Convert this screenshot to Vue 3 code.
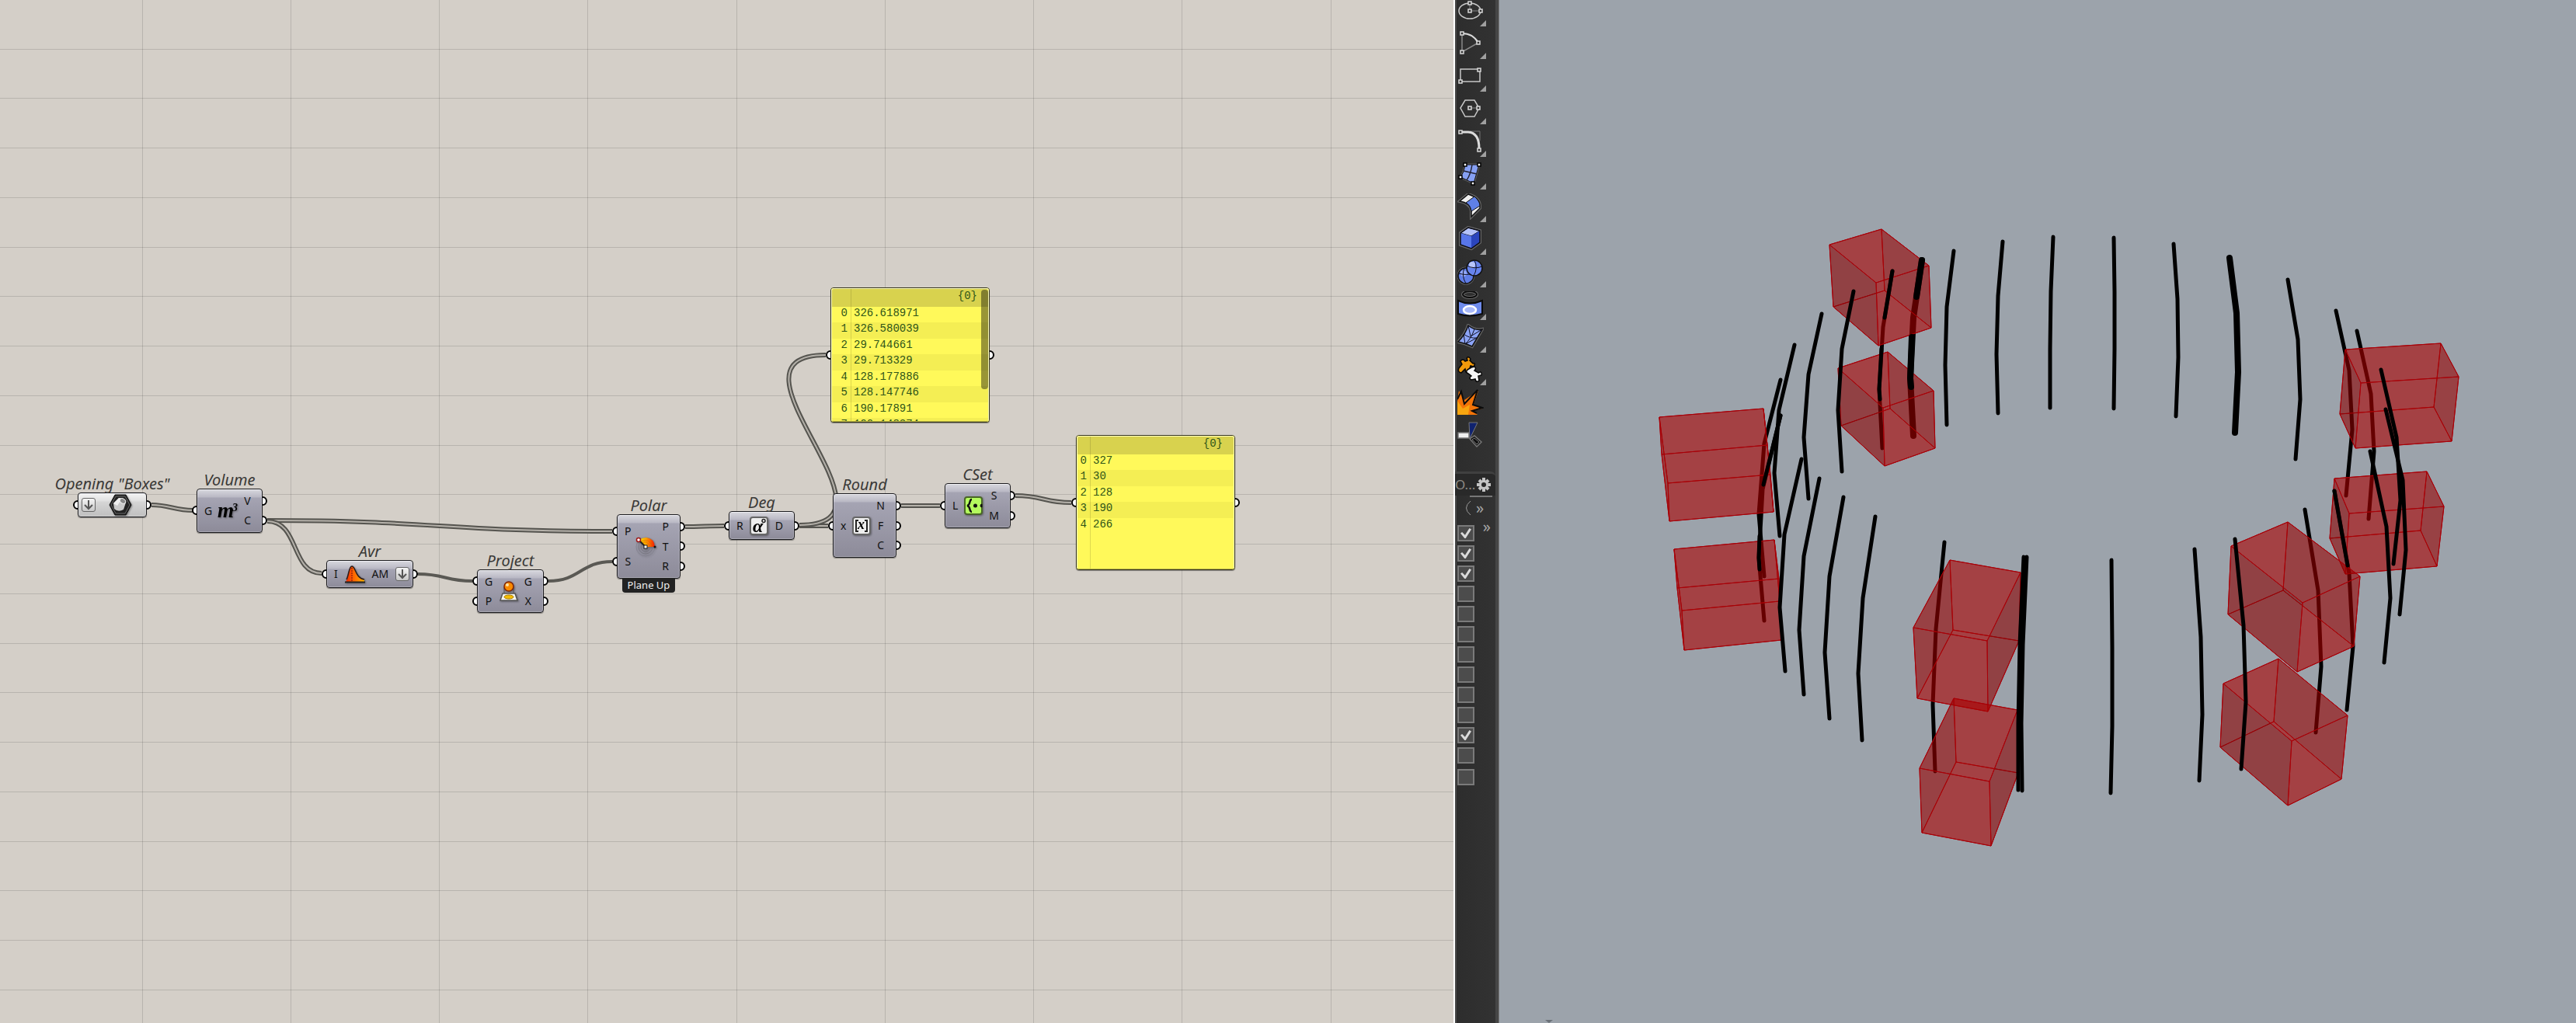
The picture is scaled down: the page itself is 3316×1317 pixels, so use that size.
<script setup>
import { ref } from 'vue'

// Canvas grid
const columns = Array.from({ length: 20 }, (_, i) => Math.floor(183 + 191.25 * i))
const rows = Array.from({ length: 32 }, (_, i) => Math.floor(63 + 63.75 * i))

// Component nodes on the canvas
const nodes = [
  { id: 'boxes', title: 'Opening "Boxes"', x: 100, y: 634, w: 89, h: 32, ins: [], outs: [], icon: 'geometry', light: true, flattenIn: true },
  { id: 'volume', title: 'Volume', x: 253, y: 629, w: 85, h: 57, ins: ['G'], outs: ['V', 'C'], icon: 'volume' },
  { id: 'avr', title: 'Avr', x: 420, y: 721, w: 112, h: 36, ins: ['I'], outs: ['AM'], icon: 'average', flattenOut: true },
  { id: 'project', title: 'Project', x: 614, y: 733, w: 86, h: 56, ins: ['G', 'P'], outs: ['G', 'X'], icon: 'project' },
  { id: 'polar', title: 'Polar', x: 794, y: 662, w: 82, h: 83, ins: ['P', 'S'], outs: ['P', 'T', 'R'], icon: 'polar', tag: 'Plane Up' },
  { id: 'deg', title: 'Deg', x: 938, y: 658, w: 85, h: 37, ins: ['R'], outs: ['D'], icon: 'degrees' },
  { id: 'round', title: 'Round', x: 1072, y: 635, w: 82, h: 83, ins: ['x'], outs: ['N', 'F', 'C'], icon: 'round' },
  { id: 'cset', title: 'CSet', x: 1216, y: 622, w: 85, h: 58, ins: ['L'], outs: ['S', 'M'], icon: 'set' }
]

const panels = [
  { id: 'angles', x: 1069, y: 370, indexWidth: 21, scroll: true, values: ['326.618971', '326.580039', '29.744661', '29.713329', '128.177886', '128.147746', '190.17891', '190.148374'] },
  { id: 'rounded', x: 1385, y: 560, indexWidth: 13, scroll: false, values: ['327', '30', '128', '190', '266'] }
]

const ports = [
  [100, 650], [189, 650], [253, 657], [338, 645], [338, 670], [420, 739], [532, 739],
  [614, 748], [614, 774], [700, 748], [700, 774], [794, 684], [794, 723],
  [876, 678], [876, 703], [876, 729], [938, 677], [1023, 677], [1072, 677],
  [1154, 651], [1154, 677], [1154, 702], [1216, 651], [1301, 638], [1301, 664],
  [1069, 457], [1274, 457], [1385, 647], [1590, 647]
]

const listWires = [
  'M195 650C218 650 225 657 248 657',
  'M344 670C566 670 566 684 788 684',
  'M344 671C386 671 374 738 414 738',
  'M882 678C900 678 914 677 932 677',
  'M1029 677H1066',
  'M1029 676C1179 676 913 457 1063 457',
  'M1160 651H1210',
  'M1307 638C1343 638 1343 647 1379 647'
]
const itemWires = [
  'M538 739C573 739 573 748 608 748',
  'M706 748C747 748 747 723 788 723'
]

// Toolbar
const tools = ['ellipse', 'arc', 'rectangle', 'polygon', 'fillet', 'surface', 'bend', 'box', 'spheres', 'projectCurve', 'mesh', 'puzzle', 'explode', 'split']
const snaps = ref([
  { name: 'End', on: true }, { name: 'Near', on: true }, { name: 'Point', on: true },
  { name: 'Mid', on: false }, { name: 'Cen', on: false }, { name: 'Int', on: false },
  { name: 'Perp', on: false }, { name: 'Tan', on: false }, { name: 'Quad', on: false },
  { name: 'Knot', on: false }, { name: 'Vertex', on: true }, { name: 'Project', on: false },
  { name: 'Disable', on: false }
])

// Boxes in the 3D view: top ring a b c d, then bottom ring
const boxes = [
  [[2355, 315], [2422, 295], [2483, 342], [2415, 364], [2360, 395], [2426, 374], [2486, 422], [2418, 445]],
  [[2366, 474], [2430, 453], [2489, 503], [2424, 525], [2370, 548], [2433, 526], [2491, 577], [2426, 600]],
  [[2136, 537], [2270, 526], [2275, 573], [2139, 585], [2147, 622], [2279, 611], [2283, 659], [2149, 671]],
  [[2155, 707], [2284, 695], [2290, 745], [2159, 757], [2165, 786], [2291, 774], [2293, 824], [2168, 837]],
  [[2510, 721], [2601, 737], [2558, 825], [2463, 808], [2514, 811], [2599, 825], [2559, 916], [2468, 899]],
  [[2515, 899], [2597, 914], [2561, 1006], [2471, 989], [2518, 981], [2598, 995], [2563, 1089], [2474, 1072]],
  [[3019, 450], [3142, 442], [3165, 485], [3039, 493], [3012, 533], [3133, 524], [3156, 568], [3032, 577]],
  [[3005, 616], [3124, 607], [3146, 652], [3024, 661], [2999, 693], [3116, 683], [3137, 729], [3019, 739]],
  [[2872, 703], [2945, 672], [3038, 742], [2964, 776], [2868, 791], [2939, 760], [3030, 832], [2957, 865]],
  [[2862, 880], [2933, 848], [3022, 921], [2950, 954], [2858, 962], [2927, 929], [3014, 1003], [2945, 1037]]
]
const faceRings = [
  { ring: [4, 5, 6, 7], shade: 'lit' },
  { ring: [0, 1, 5, 4], shade: 'lit' },
  { ring: [1, 2, 6, 5], shade: 'dim' },
  { ring: [0, 3, 7, 4], shade: 'dim' },
  { ring: [3, 2, 6, 7], shade: 'lit' },
  { ring: [0, 1, 2, 3], shade: 'lit' }
]
const faces = boxes.flatMap((box, b) =>
  faceRings.map((f, i) => ({ key: b * 6 + i, shade: f.shade, points: f.ring.map((v) => box[v].join(',')).join(' ') }))
)

// Curves of the cylinder, drawn beneath the boxes
const backCurves = [
  '2643,305 2640,375 2639,449 2639,525',
  '2578,311 2572,381 2570,456 2572,532',
  '2515,323 2506,395 2504,470 2506,547',
  '2436,349 2424,421 2419,501 2423,577',
  '2345,404 2328,482 2322,563 2328,642',
  '2292,489 2271,571 2264,662 2271,742',
  '2292,535 2269,630 2264,718 2271,799',
  '2503,698 2492,810 2488,907 2491,993',
  '2718,721 2719,834 2719,935 2717,1021',
  '2825,707 2833,820 2835,920 2831,1005',
  '2967,656 2984,760 2988,858 2981,943',
  '3005,632 3024,738 3029,832 3021,914',
  '3034,426 3052,507 3056,581 3049,668',
  '3007,400 3024,477 3028,553 3020,638',
  '2945,360 2958,437 2961,514 2955,591',
  '2798,314 2803,385 2804,460 2801,536',
  '2721,306 2722,376 2722,449 2721,526'
]
const backHeavy = ['2474,335 2463,409 2459,487 2463,561', '2870,332 2879,403 2881,479 2877,557']
// Curves and parts of curves in front of the boxes
const frontCurves = [
  '2436,349 2426,409', '2422,449 2419,501 2420,514',
  '2386,375 2371,449 2366,528 2371,607',
  '2310,444 2290,528 2284,609 2291,690',
  '2292,535 2270,624', '2265,690 2264,718 2265,733',
  '2319,591 2297,688 2291,782 2298,864',
  '2342,616 2322,716 2316,811 2322,894',
  '2373,640 2355,742 2349,840 2355,925',
  '2414,665 2398,770 2392,867 2397,953',
  '2605,717 2600,830 2598,931 2598,1017',
  '2609,717 2604,830 2602,931 2603,1018',
  '2877,694 2888,805 2891,904 2885,990',
  '3005,632 3022,728',
  '3051,581 3072,678 3077,770 3069,853',
  '3071,527 3093,618 3097,708 3089,791',
  '3065,476 3085,563 3090,644 3081,726'
]
const frontHeavy = ['2474,335 2467,382', '2461,434 2459,487 2460,498']
</script>

<template>
  <main class="workspace">
    <section class="canvas" aria-label="Definition canvas">
      <svg class="layer" aria-hidden="true">
        <g class="grid">
          <line v-for="x in columns" :key="'c' + x" :x1="x" :x2="x" y1="0" y2="100%" />
          <line v-for="y in rows" :key="'r' + y" x1="0" x2="100%" :y1="y" :y2="y" />
        </g>
        <g fill="none">
          <g v-for="d in listWires" :key="d">
            <path class="wire-list" :d="d" />
            <path class="wire-core" :d="d" />
          </g>
          <path v-for="d in itemWires" :key="d" class="wire-item" :d="d" />
        </g>
        <circle v-for="(p, i) in ports" :key="i" class="port" :cx="p[0]" :cy="p[1]" r="5" />
      </svg>

      <article
        v-for="n in nodes"
        :key="n.id"
        class="node"
        :class="{ light: n.light }"
        :style="{ left: n.x + 'px', top: n.y + 'px', width: n.w + 'px', height: n.h + 'px' }"
      >
        <h2 class="title">{{ n.title }}</h2>
        <button v-if="n.flattenIn" class="flatten" type="button" aria-label="Flatten">
          <svg width="14" height="14" viewBox="0 0 14 14"><path d="M7 1V12M2 7L7 12L12 7" /></svg>
        </button>
        <div v-if="n.ins.length" class="params">
          <span v-for="p in n.ins" :key="p">{{ p }}</span>
        </div>

        <svg v-if="n.icon === 'geometry'" class="icon geometry" width="30" height="28" viewBox="0 0 30 28">
          <path d="M8 1H22L29 14L22 27H8L1 14Z" fill="#222" stroke="#111" />
          <path d="M9 3H21L27 14L21 25H9L3 14Z" fill="none" stroke="#666" />
          <path d="M6 12L13 5Q20 5 22 11L19 20Q12 24 7 19Z" fill="#c9c9c9" />
          <path d="M6 12L13 5Q15 5 17 6L11 15Z" fill="#eee" />
          <ellipse cx="18" cy="9" rx="4" ry="3" transform="rotate(35 18 9)" fill="#888" stroke="#eee" />
        </svg>
        <svg v-else-if="n.icon === 'volume'" class="icon" width="28" height="24" viewBox="0 0 28 24">
          <text x="0" y="20" class="glyph-m">m</text>
          <text x="19" y="12" class="glyph-3">3</text>
        </svg>
        <svg v-else-if="n.icon === 'average'" class="icon" width="26" height="24" viewBox="0 0 26 24">
          <defs>
            <linearGradient id="heat"><stop offset="0" stop-color="#f02800" /><stop offset=".35" stop-color="#ff5a00" /><stop offset="1" stop-color="#ffb400" /></linearGradient>
          </defs>
          <path d="M1 22C5 18 4 2 9 2C14 2 13 18 25 19V22Z" fill="url(#heat)" />
          <path d="M2 19C5 14 5 2 9 2C14 2 13 17 25 19" fill="none" stroke="#2b1c1c" stroke-width="1.5" />
          <path d="M0 22.5H26" stroke="#222" stroke-width="2" />
          <path d="M9 4V21" stroke="#611" stroke-dasharray="2 1" />
        </svg>
        <svg v-else-if="n.icon === 'project'" class="icon" width="24" height="26" viewBox="0 0 24 26">
          <path d="M6 8V20M18 8V20" stroke="#555" />
          <path d="M4 16H20L23 25H1Z" fill="#f4f4ee" stroke="#555" stroke-width="1.5" />
          <ellipse cx="12" cy="20.5" rx="6" ry="2.5" fill="#f4bd00" stroke="#a87800" />
          <circle cx="12" cy="7" r="6" fill="#f98a00" stroke="#822500" stroke-width="1.5" />
          <circle cx="10" cy="5" r="2" fill="#ffe2a8" />
        </svg>
        <svg v-else-if="n.icon === 'polar'" class="icon" width="28" height="26" viewBox="0 0 28 26">
          <defs>
            <linearGradient id="fan"><stop offset="0" stop-color="#f2e600" /><stop offset=".45" stop-color="#ff9d00" /><stop offset="1" stop-color="#f51800" /></linearGradient>
          </defs>
          <g fill="none" stroke="#73727c"><circle cx="13" cy="13" r="12" opacity=".4" /><circle cx="13" cy="13" r="9" opacity=".7" /><circle cx="13" cy="13" r="6" /><circle cx="13" cy="13" r="3" /></g>
          <path d="M13 13L5 4Q9 1 14 1Q24 2 25 13Z" fill="url(#fan)" />
          <path d="M13 13L9 8Q15 4 19 13M7 6Q18 1 22 13" fill="none" stroke="#d45a00" opacity=".6" />
          <path d="M13 13L5 5" stroke="#222" stroke-width="2" />
          <circle cx="4" cy="4" r="2.5" fill="#fff" stroke="#a01818" stroke-width="1.5" />
          <rect x="11" y="11" width="4" height="4" fill="#fff" stroke="#222" />
          <circle cx="25" cy="13" r="1.5" fill="#111" />
        </svg>
        <svg v-else-if="n.icon === 'degrees'" class="icon" width="24" height="24" viewBox="0 0 24 24">
          <rect x="1" y="1" width="22" height="22" rx="3" fill="#eee" stroke="#666" stroke-width="2" />
          <text x="4" y="20" class="glyph-alpha">α</text>
          <circle cx="18" cy="5.5" r="2" fill="none" stroke="#222" stroke-width="1.5" />
        </svg>
        <svg v-else-if="n.icon === 'round'" class="icon" width="24" height="24" viewBox="0 0 24 24">
          <rect x="1" y="1" width="22" height="22" rx="3" fill="#eee" stroke="#666" stroke-width="2" />
          <path d="M8 5H5V19H8M16 5H19V19H16" fill="none" stroke="#222" stroke-width="2" />
          <text x="7" y="16" class="glyph-x">x</text>
        </svg>
        <svg v-else class="icon" width="24" height="24" viewBox="0 0 24 24">
          <rect x="1" y="1" width="22" height="22" rx="3" fill="#b4fb5e" stroke="#4a6628" stroke-width="2" />
          <path d="M10 4C6 4 9 11 4 12C9 13 6 20 10 20" fill="none" stroke="#111" stroke-width="2.5" />
          <circle cx="14.5" cy="12" r="2.5" fill="#111" />
          <path d="M23 10A2 2 0 0 0 23 14Z" fill="#111" stroke="#111" />
        </svg>

        <div v-if="n.outs.length" class="params">
          <span v-for="p in n.outs" :key="p">{{ p }}</span>
        </div>
        <button v-if="n.flattenOut" class="flatten end" type="button" aria-label="Flatten">
          <svg width="14" height="14" viewBox="0 0 14 14"><path d="M7 1V12M2 7L7 12L12 7" /></svg>
        </button>
        <p v-if="n.tag" class="tag">{{ n.tag }}</p>
      </article>

      <div v-for="p in panels" :key="p.id" class="panel" :style="{ left: p.x + 'px', top: p.y + 'px' }">
        <table>
          <thead>
            <tr><th class="index" :style="{ width: p.indexWidth + 'px' }"></th><th class="path" scope="col">{0}</th></tr>
          </thead>
          <tbody>
            <tr v-for="(v, i) in p.values" :key="i"><td class="index">{{ i }}</td><td class="value">{{ v }}</td></tr>
            <tr v-if="!p.scroll" class="rest"><td class="index"></td><td></td></tr>
          </tbody>
        </table>
        <div v-if="p.scroll" class="thumb"></div>
      </div>
    </section>

    <aside class="sidebar">
      <nav class="tools" aria-label="Tools">
        <button v-for="(t, i) in tools" :key="t" type="button" class="tool" :class="{ more: i < 12 }" :aria-label="t">
          <svg width="34" height="34" viewBox="0 0 34 34" fill="none">
            <g v-if="t === 'ellipse'">
              <ellipse cx="16" cy="17" rx="14" ry="10" stroke="#c8c8c8" stroke-width="1.5" />
              <path d="M16 7V17H29" stroke="#888" />
              <g class="handle"><rect x="14" y="5" width="4" height="4" /><rect x="14" y="15" width="4" height="4" /><rect x="28" y="15" width="4" height="4" /></g>
            </g>
            <g v-else-if="t === 'arc'">
              <path d="M6 4V28L27 16" stroke="#888" stroke-width="1.5" />
              <path d="M6 4Q20 4 27 16" stroke="#d8d8d8" stroke-width="2" />
              <g class="handle"><rect x="4" y="2" width="4" height="4" /><rect x="4" y="26" width="4" height="4" /><rect x="25" y="14" width="4" height="4" /></g>
            </g>
            <g v-else-if="t === 'rectangle'">
              <rect x="4" y="8" width="25" height="16" stroke="#c8c8c8" stroke-width="1.5" />
              <g class="handle"><rect x="26" y="7" width="4" height="4" /><rect x="2" y="22" width="4" height="4" /></g>
            </g>
            <g v-else-if="t === 'polygon'">
              <path d="M10 6H22L28 16L22 27H10L4 16Z" stroke="#c8c8c8" stroke-width="1.5" />
              <path d="M16 16H27" stroke="#888" />
              <g class="handle"><rect x="14" y="14" width="4" height="4" /><rect x="25" y="14" width="4" height="4" /></g>
            </g>
            <g v-else-if="t === 'fillet'">
              <path d="M16 4H29V16" stroke="#777" />
              <path d="M5 5H14Q28 6 28 26" stroke="#dcdcdc" stroke-width="3" />
              <g class="handle"><rect x="2" y="3" width="4" height="4" /><rect x="26" y="26" width="4" height="4" /></g>
            </g>
            <g v-else-if="t === 'surface'">
              <path d="M10 5H28L21 29L4 21Q9 15 10 5Z" fill="#7d94ee" stroke="#5f5f5f" stroke-width="3" />
              <path d="M10 5H28L21 29L4 21Q9 15 10 5Z" fill="#86a0f4" stroke="#111" />
              <path d="M19 5Q17 18 12 25M8 13L25 17" stroke="#223" stroke-width="1.5" />
              <g fill="#fff" stroke="#000" stroke-width="1.5"><rect x="8" y="3" width="4" height="4" /><rect x="26" y="3" width="4" height="4" /><rect x="2" y="19" width="4" height="4" /><rect x="18" y="27" width="4" height="4" /></g>
            </g>
            <g v-else-if="t === 'bend'">
              <path d="M3 10L14 1Q30 6 29 18V19L18 30V22Q16 12 3 10Z" fill="#f0f0f0" stroke="#666" stroke-width="4" />
              <path d="M3 10L14 1Q30 6 29 18V19L18 30V22Q16 12 3 10Z" fill="#eee" stroke="#111" stroke-width="1.5" />
              <path d="M11 12L22 4Q29 10 29 16L18 23Q17 15 11 12Z" fill="#5f80e6" stroke="#111" />
            </g>
            <g v-else-if="t === 'box'">
              <path d="M4 9L14 2L29 6V21L18 29L4 24Z" stroke="#666" stroke-width="4" />
              <path d="M4 9L14 2L29 6L18 13Z" fill="#b4c2fa" stroke="#111" />
              <path d="M4 9L18 13V29L4 24Z" fill="#5876ea" />
              <path d="M18 13L29 6V21L18 29Z" fill="#2b45bd" />
              <path d="M4 9L14 2L29 6V21L18 29L4 24Z" stroke="#0c0c14" stroke-width="1.5" />
            </g>
            <g v-else-if="t === 'spheres'">
              <circle cx="11" cy="22" r="10" fill="#5774dc" stroke="#666" stroke-width="3" />
              <circle cx="11" cy="22" r="10" fill="#5f7de6" stroke="#111" stroke-width="1.5" />
              <circle cx="8" cy="19" r="4" fill="#93a8f5" />
              <path d="M2 19Q12 22 19 19M9 12Q5 22 11 32" stroke="#112" />
              <circle cx="22" cy="12" r="10" fill="#6784ee" stroke="#111" stroke-width="1.5" />
              <circle cx="19" cy="8" r="4" fill="#b9c6fb" />
              <path d="M12 9Q22 14 32 10M22 2Q27 12 21 22" stroke="#112" />
            </g>
            <g v-else-if="t === 'projectCurve'">
              <ellipse cx="16" cy="4" rx="9" ry="4" stroke="#666" stroke-width="4" />
              <ellipse cx="16" cy="4" rx="9" ry="4" stroke="#0b0b0b" stroke-width="2" />
              <path d="M1 12Q16 19 32 12V29Q16 34 1 29Z" fill="#6e8bec" stroke="#0b0b0b" stroke-width="2" />
              <ellipse cx="16" cy="24" rx="8" ry="5" fill="#a9bafa" stroke="#fff" stroke-width="2.5" />
            </g>
            <g v-else-if="t === 'mesh'">
              <path d="M14 2Q23 9 32 7L19 29Q11 25 1 23Q10 14 14 2Z" fill="#7f9af2" stroke="#666" stroke-width="4" />
              <path d="M14 2Q23 9 32 7L19 29Q11 25 1 23Q10 14 14 2Z" fill="#8ca4f6" stroke="#111" stroke-width="1.5" />
              <path d="M22 7Q17 20 10 26M8 13Q16 19 25 18M14 2L17 16L32 7M8 13L10 26L25 18" stroke="#112" />
            </g>
            <g v-else-if="t === 'puzzle'">
              <path d="M2 15L6 10L4 6Q7 2 10 6L13 5Q11 0 15 1Q18 3 16 5L20 9Q24 8 21 13L17 12L15 18Q15 23 11 20L10 16L5 21Q0 20 2 15Z" fill="#f29a0b" stroke="#050505" stroke-width="1.5" />
              <path d="M13 17L18 14L22 13Q25 15 22 18L27 21Q32 18 31 24L27 25L28 31Q24 34 23 29L18 30Q14 28 18 25L14 22Q10 20 13 17Z" fill="#f4f4f4" stroke="#050505" stroke-width="1.5" />
            </g>
            <g v-else-if="t === 'explode'">
              <path d="M0 33V15L2 2L9 14L27 2L21 20L32 25L21 28L26 33Z" fill="#f37408" />
              <path d="M0 33V15L7 25L16 20L14 33Z" fill="#f7a510" />
              <path d="M0 13L5 3L9 19L26 1L20 20L32 24L19 28L25 31" stroke="#0c0c0c" stroke-width="2" />
            </g>
            <g v-else>
              <path d="M15 1H26L16 22Z" fill="#10236f" stroke="#777" />
              <rect x="1" y="14" width="14" height="7" fill="#efefef" stroke="#777" stroke-width="1.5" />
              <path d="M16 22L22 18L31 26L25 32Z" fill="#111" stroke="#777" stroke-width="1.5" />
              <path d="M19 23L22 21L28 26L25 29Z" stroke="#777" />
            </g>
          </svg>
        </button>
      </nav>

      <header class="tab">
        <span>O...</span>
        <button type="button" aria-label="Options">
          <svg width="18" height="18" viewBox="0 0 18 18">
            <g stroke="#c4c4c4" stroke-width="4"><path d="M9 0V18M0 9H18M3 3L15 15M15 3L3 15" /></g>
            <circle cx="9" cy="9" r="6" fill="#c4c4c4" /><circle cx="9" cy="9" r="3" fill="#292929" />
          </svg>
        </button>
      </header>
      <div class="overflow first"><svg width="8" height="20" viewBox="0 0 8 20"><path d="M7 1Q-4 10 7 19" /></svg><span>»</span></div>
      <div class="overflow second"><span>»</span></div>
      <form class="snaps">
        <input v-for="s in snaps" :key="s.name" v-model="s.on" type="checkbox" :aria-label="s.name" />
      </form>
    </aside>

    <section class="viewport" aria-label="Perspective view">
      <svg viewBox="1930 0 1386 1317" preserveAspectRatio="xMidYMid slice">
        <g class="curve">
          <polyline v-for="c in backCurves" :key="c" :points="c" />
          <polyline v-for="c in backHeavy" :key="c" class="heavy" :points="c" />
        </g>
        <polygon v-for="f in faces" :key="f.key" class="face" :class="f.shade" :points="f.points" />
        <g class="curve">
          <polyline v-for="c in frontCurves" :key="c" :points="c" />
          <polyline v-for="c in frontHeavy" :key="c" class="heavy" :points="c" />
        </g>
        <path d="M1989 1313H1999L1994 1317Z" fill="#6b7178" />
      </svg>
    </section>
  </main>
</template>

<style>
body {
  margin: 0;
}
</style>

<style scoped>
.workspace {
  display: flex;
  height: 100vh;
  overflow: hidden;
  font-family: "Noto Sans", "Open Sans", sans-serif;
}

/* Canvas */
.canvas {
  flex: 1871 1 0;
  min-width: 0;
  position: relative;
  overflow: hidden;
  background: #d4cfc8;
}
.layer {
  position: absolute;
  inset: 0;
  width: 100%;
  height: 100%;
}
.grid {
  stroke: #000;
  stroke-opacity: 0.13;
  stroke-width: 1;
  shape-rendering: crispEdges;
}
.wire-list {
  stroke: #55544f;
  stroke-width: 6;
}
.wire-core {
  stroke: #b5b1aa;
  stroke-width: 2;
}
.wire-item {
  stroke: #5a5954;
  stroke-width: 4;
}
.port {
  fill: #fff;
  stroke: #000;
  stroke-width: 2;
}

.node {
  position: absolute;
  box-sizing: border-box;
  display: flex;
  align-items: center;
  justify-content: space-between;
  padding: 2px 14px 2px 9px;
  border: 1px solid #1c1c20;
  border-radius: 4px;
  background: linear-gradient(#d8d8de, #b9b8c4 10px, #a5a4b3 11px, #8d8b99);
  box-shadow: inset 0 1px #eeeef2, inset 0 0 0 1px #ffffff40, 0 1px 1px #00000060;
  color: #111;
  font-size: 14px;
  line-height: 20px;
}
.node.light {
  padding: 2px 18px 2px 4px;
  background: linear-gradient(#f4f4f4, #e0e0e0 10px, #d6d6d6 11px, #bfbfbf);
}
.title {
  position: absolute;
  left: 50%;
  bottom: 100%;
  transform: translateX(-50%);
  margin: 0;
  color: #3a3937;
  font-size: 20px;
  font-style: italic;
  font-weight: 400;
  line-height: 24px;
  white-space: nowrap;
}
.params {
  align-self: stretch;
  display: flex;
  flex-direction: column;
  text-align: center;
}
.params span {
  flex: 1;
  display: flex;
  align-items: center;
  justify-content: center;
}
.icon {
  flex: none;
  overflow: visible;
  filter: drop-shadow(1px 1px 1px #00000060);
}
.glyph-m {
  font: italic bold 27px "Liberation Serif", serif;
}
.glyph-3 {
  font: italic bold 14px "Liberation Serif", serif;
}
.glyph-alpha {
  font: italic bold 24px "Liberation Serif", serif;
}
.glyph-x {
  font: italic bold 18px "Liberation Serif", serif;
}
.flatten {
  flex: none;
  display: grid;
  place-items: center;
  box-sizing: border-box;
  width: 18px;
  height: 18px;
  padding: 0;
  border: 1px solid #666;
  border-radius: 3px;
  background: linear-gradient(#f4f4f4, #c8c8c8);
}
.flatten.end {
  margin-right: -10px;
}
.flatten path {
  fill: none;
  stroke: #555;
  stroke-width: 2;
}
.tag {
  position: absolute;
  left: 6px;
  right: 6px;
  top: 100%;
  margin: 0;
  border-radius: 0 0 4px 4px;
  background: #222;
  color: #f0f0f0;
  font-size: 13px;
  line-height: 19px;
  text-align: center;
  white-space: nowrap;
}

/* Data panels */
.panel {
  position: absolute;
  box-sizing: border-box;
  width: 205px;
  height: 174px;
  overflow: hidden;
  border: 1px solid #35341c;
  border-radius: 4px;
  background: #fff95a;
  box-shadow: 0 1px 1px #00000060;
}
.panel::after {
  content: "";
  position: absolute;
  inset: 0;
  border: 1px solid #ffffc0;
  border-bottom-color: #b8b44a;
  border-radius: 3px;
}
.panel table {
  width: 100%;
  table-layout: fixed;
  border-collapse: collapse;
  color: #2f5518;
  font: 14px/20px "Liberation Mono", monospace;
}
.panel th {
  height: 24px;
  padding: 0;
  background: #d8d24e;
  font-weight: 400;
  line-height: 20px;
  vertical-align: top;
}
.panel th.path {
  padding-right: 15px;
  text-align: right;
}
.panel td {
  height: 20px;
  padding: 0 0 0 3px;
  line-height: 17px;
  vertical-align: top;
}
.panel tbody tr:nth-child(even):not(.rest) td {
  height: 21px;
  background: #f4ee54;
}
.panel .index {
  padding: 0 4px 0 0;
  border-right: 1px solid #00000020;
  text-align: right;
}
.panel .rest td {
  height: 60px;
}
.thumb {
  position: absolute;
  top: 2px;
  right: 1px;
  width: 9px;
  height: 128px;
  border-radius: 4px;
  background: #00000066;
}

/* Toolbar */
.sidebar {
  flex: none;
  box-sizing: border-box;
  width: 59px;
  overflow: hidden;
  border-left: 2px solid #fff;
  border-right: 1px solid #777;
  background: linear-gradient(90deg, #484848 2px, #2d2d2d 2px, #323232 52px, #464646 52px);
}
.tools {
  display: flex;
  flex-direction: column;
  margin-top: -8px;
}
.tool {
  position: relative;
  display: block;
  width: 40px;
  height: 42px;
  padding: 5px 0 3px 3px;
  border: 0;
  background: none;
}
.tool svg {
  display: block;
}
.tool.more::after {
  content: "";
  position: absolute;
  right: 0;
  bottom: 0;
  width: 8px;
  height: 8px;
  background: #a0a0a0;
  clip-path: polygon(100% 0, 100% 100%, 0 100%);
}
.handle {
  fill: #333;
  stroke: #d8d8d8;
  stroke-width: 1.5;
}
.tab {
  display: flex;
  align-items: center;
  justify-content: space-between;
  width: 46px;
  height: 28px;
  margin-top: 27px;
  padding-right: 6px;
  border-top: 3px solid #404040;
  border-radius: 0 6px 0 0;
  background: #292929;
  color: #8d8a84;
  font-size: 17px;
  line-height: 24px;
}
.tab button {
  display: block;
  padding: 0;
  border: 0;
  background: none;
}
.tab svg {
  display: block;
}
.overflow {
  box-sizing: border-box;
  display: flex;
  align-items: center;
  color: #a5a5a5;
  font-size: 20px;
  line-height: 20px;
}
.overflow svg {
  fill: none;
  stroke: #999;
}
.overflow.first {
  width: 29px;
  height: 30px;
  margin-left: 19px;
  border-top: 2px solid #777;
  gap: 6px;
}
.overflow.first svg {
  flex: none;
  margin-left: -6px;
}
.overflow.second {
  align-items: flex-start;
  justify-content: flex-end;
  width: 46px;
  height: 8px;
}
.snaps {
  display: flex;
  flex-direction: column;
  gap: 5px;
  padding-left: 3px;
}
.snaps input {
  appearance: none;
  box-sizing: border-box;
  width: 22px;
  height: 21px;
  margin: 0;
  border: 2px solid #7a7a7a;
  background: #4c4c4c;
}
.snaps input:last-child {
  margin-top: 2px;
}
.snaps input:checked::before {
  content: "";
  display: block;
  width: 14px;
  height: 13px;
  margin: 2px;
  background: #dadada;
  clip-path: polygon(0 50%, 15% 38%, 42% 68%, 82% 0, 100% 12%, 48% 100%, 38% 100%);
}

/* 3D view */
.viewport {
  flex: 1386 1 0;
  min-width: 0;
  background: #9ca3ab;
}
.viewport svg {
  display: block;
  width: 100%;
  height: 100%;
}
.curve {
  fill: none;
  stroke: #000;
  stroke-width: 5;
  stroke-linecap: round;
  stroke-linejoin: round;
}
.curve .heavy {
  stroke-width: 8;
}
.face {
  fill-opacity: 0.37;
  stroke: #a80008;
  stroke-width: 1;
  stroke-linejoin: round;
}
.face.lit {
  fill: #aa0000;
}
.face.dim {
  fill: #780000;
}
</style>
